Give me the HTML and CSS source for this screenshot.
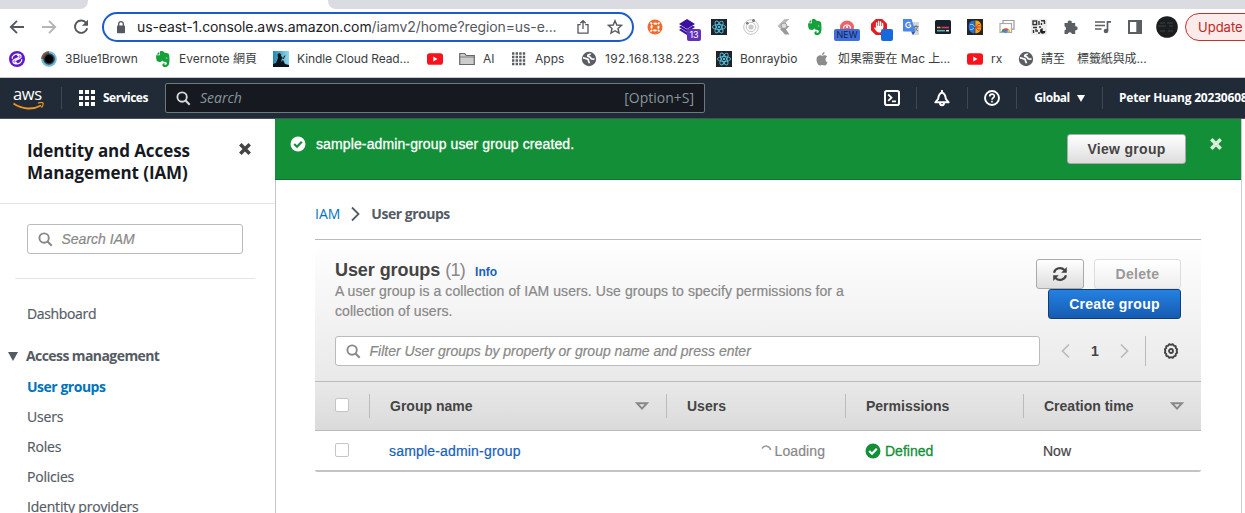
FILE: index.html
```html
<!DOCTYPE html>
<html lang="en">
<head>
<meta charset="utf-8">
<title>IAM User groups</title>
<link rel="stylesheet" href="styles.css">
</head>
<body>
<svg class="defs" width="0" height="0">
  <defs>
    <symbol id="search" viewBox="0 0 16 16"><circle cx="6.5" cy="6.5" r="5" fill="none" stroke="currentColor" stroke-width="2"/><path d="M10.2 10.2 14.6 14.6" stroke="currentColor" stroke-width="2.2"/></symbol>
    <symbol id="react" viewBox="0 0 16 16"><rect width="16" height="16" fill="#20232a"/><g fill="none" stroke="#53c1de" stroke-width=".9"><ellipse cx="8" cy="8" rx="6.6" ry="2.5"/><ellipse cx="8" cy="8" rx="6.6" ry="2.5" transform="rotate(60 8 8)"/><ellipse cx="8" cy="8" rx="6.6" ry="2.5" transform="rotate(120 8 8)"/></g><circle cx="8" cy="8" r="1.2" fill="#53c1de"/></symbol>
    <symbol id="evernote" viewBox="0 0 16 16"><path d="M5 .5V4.200H1.200C.8 6 1.300 9 2.200 10.200c1.300.8 3.600.9 4.300.4l.6-1.300c.5 1.200 1.500 1.600 3.300 1.600 1.100.1 1.400.9 1.400 1.700 0 1-.6 1.300-1.800 1.200-.7 0-.8-.9-.2-1.300-1.500-.6-2.400.3-2.400 1.500 0 1.400.9 2 2.700 2 3.300 0 4.400-2.500 4.400-7C14.500 5 14.200 3.300 13.300 2.500 12.300 2 10.500 1.800 9.500 1.700 8.600.1 6.500-.3 5 .5z" fill="#14a03a"/><path d="M1.500 3.500 4.300.800v2.700z" fill="#14a03a"/><path d="M10.600 7.300c.3-1.200 1.700-1.100 2 .2-.7-.3-1.300-.3-2-.2z" fill="#fff"/></symbol>
    <symbol id="youtube" viewBox="0 0 16 16"><rect y="2.300" width="16" height="11.400" rx="2.800" fill="#f8121b"/><path d="M6.300 5.600v4.800L10.500 8z" fill="#fff"/></symbol>
    <symbol id="globe" viewBox="0 0 16 16"><circle cx="8" cy="8" r="7.200" fill="#5b5e63"/><path d="M2 6.800c1.800 0 2.300.9 3.800 1s1.700 1 1.700 2 .8 1 .8 2.400M9.500 2.500c0 1.300-2.800.9-2.800 2.300 0 1.200 1.800.7 2.600 1.500.7.7.3 1.500 1.500 1.700l2.700.2" fill="none" stroke="#fff" stroke-width="1.700"/></symbol>
    <symbol id="check" viewBox="0 0 16 16"><circle cx="8" cy="8" r="7.500" fill="currentColor"/><path class="tick" d="M4.200 8 7 10.700 11.800 5.700" fill="none" stroke-width="2.200"/></symbol>
    <symbol id="close" viewBox="0 0 12 12"><path d="M1.300 1.300 10.700 10.700M10.700 1.300 1.300 10.700" stroke="currentColor" stroke-width="3.500"/></symbol>
    <symbol id="sort" viewBox="0 0 14 9"><path d="M2 1.200h10L7 6.700z" fill="none" stroke="#888" stroke-width="1.900"/></symbol>
  </defs>
</svg>

<div class="tabs"><div class="tab-left"></div><div class="tab-active"></div><div class="tab-right"></div></div>

<div class="toolbar">
  <div class="nav-buttons">
    <svg width="16" height="16" viewBox="0 0 16 16"><path d="M15 8H2.500M8 1.800 1.800 8 8 14.200" fill="none" stroke="#55585d" stroke-width="1.900"/></svg>
    <svg width="16" height="16" viewBox="0 0 16 16"><path d="M1 8h12.500M8 1.800 14.200 8 8 14.200" fill="none" stroke="#b3b5b8" stroke-width="1.900"/></svg>
    <svg width="16" height="16" viewBox="0 0 16 16"><path d="M13.200 4A6.200 6.200 0 1 0 14.200 9.200" fill="none" stroke="#55585d" stroke-width="1.900"/><path d="M15 .8v6H9z" fill="#55585d"/></svg>
  </div>
  <div class="address">
    <svg class="lock" width="10" height="13" viewBox="0 0 10 13"><rect x="1" y="4.500" width="8" height="7.700" rx=".8" fill="#55585d"/><path d="M2.700 5V3a2.300 2.300 0 0 1 4.600 0v2" fill="none" stroke="#55585d" stroke-width="1.300"/></svg>
    <span class="url"><b>us-east-1.console.aws.amazon.com</b>/iamv2/home?region=us-e...</span>
    <svg class="share" width="14" height="16" viewBox="0 0 14 16"><path d="M4.700 5.700H2v8.500h10V5.700H9.300M7 10V2M4.300 4.300 7 1.700l2.700 2.600" fill="none" stroke="#55585d" stroke-width="1.300"/></svg>
    <svg class="star" width="16" height="16" viewBox="0 0 16 16"><path d="m8 1.700 1.800 4.300 4.700.4L11 9.500l1 4.600-4-2.400-4 2.400 1-4.600L1.500 6.400 6.200 6z" fill="none" stroke="#55585d" stroke-width="1.400"/></svg>
  </div>
  <div class="extensions">
    <span><svg width="16" height="16" viewBox="0 0 16 16"><circle cx="8" cy="8" r="7.500" fill="#f26b2e"/><circle cx="8" cy="8" r="3.500" fill="none" stroke="#fff" stroke-width="1.900" stroke-dasharray="3.500 2" stroke-dashoffset="1.800"/><path d="m3.500 3.500 1.600 1.600m5.800 5.800 1.600 1.600m0-9-1.600 1.600m-5.800 5.800-1.600 1.600" stroke="#fff" stroke-width="1.500"/></svg></span>
    <span><svg width="16" height="16" viewBox="0 0 16 16"><path d="M8 0 16 5 8 10 0 5zM0 8l2-1.300 6 3.800 6-3.800L16 8l-8 5zM0 11l2-1.300 6 3.800V16z" fill="#3b12a0"/></svg><i class="badge count">13</i></span>
    <span><svg width="16" height="16"><use href="#react"/></svg></span>
    <span><svg width="16" height="16" viewBox="0 0 16 16"><g fill="none" stroke="#c4c4c4"><circle cx="8" cy="8" r="7.300"/><circle cx="8" cy="8" r="4.700"/></g><circle cx="8" cy="8" r="2.600" fill="#c9c9c9"/><circle cx="10.500" cy="1.500" r="1.500" fill="#777"/><circle cx="4.300" cy="4.200" r="1.300" fill="#777"/></svg></span>
    <span><svg width="16" height="16" viewBox="0 0 16 16"><path d="M9.500 0h5L5 9.500 2.500 7z" fill="#bbb"/><path d="M9 7h5.500l-3.500 3.500 3.500 5H10L5 10z" fill="#999"/><circle cx="9" cy="6.800" r="2.800" fill="#ddd" stroke="#999"/></svg></span>
    <span><svg width="16" height="16"><use href="#evernote"/></svg></span>
    <span><svg width="16" height="16" viewBox="0 0 16 16"><path d="M1 8a7 6.500 0 0 1 14 0v5H1z" fill="#ea6468"/><path d="M4.500 9.500a3.500 3.500 0 0 1 7 0" fill="none" stroke="#fff" stroke-width="1.200"/><circle cx="8" cy="8" r="1.100" fill="#fff"/></svg><i class="badge new">NEW</i></span>
    <span><svg width="16" height="16" viewBox="0 0 16 16"><path d="M4.800 0h6.400L16 4.800v6.400L11.200 16H4.800L0 11.200V4.800z" fill="#e51b20"/><path d="M5.600 8V4m2 4V2.500M9.600 8V3m2 5V4.500" stroke="#fff" stroke-width="1.400" stroke-linecap="round"/><path d="M4.900 7h7.400c0 4-1.300 6.500-4 6.500-2.200 0-3.600-2-5.300-4.500.7-.8 1.400-.3 1.900.3z" fill="#fff"/></svg><i class="badge blue"></i></span>
    <span><svg width="16" height="16" viewBox="0 0 16 16"><path d="M8 3h8v13H9z" fill="#d7d7d7"/><path d="M0 0h8.500l4 12.500H1.200A1.200 1.200 0 0 1 0 11.300z" fill="#4b86e8"/><path d="m8 12.500 4.500 0L10 16z" fill="#2b57b8"/><path d="M8 6H5.500M7.300 4.200A2.600 2.600 0 1 0 8 6.500" fill="none" stroke="#fff" stroke-width="1.200"/><path d="M10.500 7.500h5M13 6v1.500M14.500 7.500c-.5 2.500-2 3.700-3 4.500M11.500 8c.8 2 2 3 3.500 4" fill="none" stroke="#617a85"/></svg></span>
    <span><svg width="16" height="16" viewBox="0 0 16 16"><rect y="1" width="16" height="14" rx="1.500" fill="#18202c"/><path d="M2 8.500h3.500" stroke="#eea23e" stroke-width="1.600"/><path d="M6.500 8.500H14" stroke="#d83d5d" stroke-width="1.600"/><path d="M2 11.700h8" stroke="#52b3ad" stroke-width="1.600"/><path d="M11 11.700h3" stroke="#ddd" stroke-width="1.600"/></svg></span>
    <span><svg width="16" height="16" viewBox="0 0 16 16"><rect width="16" height="16" fill="#282420"/><path d="M7.700 1.500C3.800 1 1.500 4 1.700 8c0 4 2.500 6.500 6 6.300z" fill="#2673dc"/><path d="M8.300 1.500c3.900-.5 6.200 2.500 6 6.500 0 4-2.500 6.500-6 6.300z" fill="#f3a51c"/><path d="M3 5.500h3l1.500 2M3 10.500h2l2-1.500" stroke="#91c4fa" fill="none"/><path d="M8.500 8 11 5.500h2M8.500 8 11 11h2M8.500 8H14" stroke="#d33d25" fill="none"/></svg></span>
    <span><svg width="16" height="16" viewBox="0 0 16 16"><path d="M4 4V1.500h11v8.700h-2.500" fill="none" stroke="#999" stroke-width="1.200"/><rect x="1" y="4.500" width="11.500" height="9" fill="#fff" stroke="#aaa" stroke-width="1.200"/><path d="M2.500 13a4.300 4.300 0 0 1 8.500 0z" fill="#df4937"/><path d="M2.500 13 4 10l2.500 3z" fill="#2ba24c"/><path d="m11 13-1-3-3 3z" fill="#f5c52c"/><circle cx="6.700" cy="12.200" r="1.700" fill="#4285f4"/></svg></span>
    <span><svg width="16" height="16" viewBox="0 0 16 16"><rect width="16" height="16" fill="#eee"/><g fill="none" stroke="#333" stroke-width="1.400"><rect x="2" y="2" width="3.600" height="3.600"/><path d="M8 2v4M10 1.800h4M13.500 2v3M10.500 4v2M2 8.500h4M8 8h2M2.500 11v3M5 10v2h2M7 14h2"/></g><circle cx="11.700" cy="12" r="2.700" fill="#222"/><path d="M11.700 12V9h3v3z" fill="#eee"/></svg></span>
    <span><svg width="16" height="16" viewBox="0 0 16 16"><path d="M1.500 4h3.300a2 2 0 1 1 3.900 0h3.500v3.300a2 2 0 1 1 0 3.900V15H9a2.200 2.200 0 0 0-4.300 0H1.500v-3.500a2.200 2.200 0 0 0 0-4.200z" fill="#5b5e63"/></svg></span>
    <span><svg width="16" height="16" viewBox="0 0 16 16"><path d="M0 3h10M0 6.500h10M0 10h6.500" stroke="#5b5e63" stroke-width="1.500"/><path d="M16 2.800h-3.500V12" fill="none" stroke="#5b5e63" stroke-width="1.700"/><circle cx="11" cy="12" r="2.300" fill="#5b5e63"/></svg></span>
    <span><svg width="16" height="16" viewBox="0 0 16 16"><rect x="2" y="2" width="12" height="12" fill="#fff" stroke="#5b5e63" stroke-width="2"/><path d="M9.300 2H14v12H9.300z" fill="#5b5e63"/></svg></span>
    <span><svg width="22" height="22" viewBox="0 0 22 22"><circle cx="11" cy="11" r="10.800" fill="#1b1d1f"/><path d="M4 7h5m2 0h6M2 10h8m3 0h4M4 15h5m3 0h5" stroke="#39444a"/></svg></span>
  </div>
  <div class="update">Update</div>
</div>

<div class="bookmarks">
  <div><svg width="16" height="16" viewBox="0 0 16 16"><circle cx="8" cy="8" r="8" fill="#5f19c8"/><path d="M3.300 7.800C2.500 4.800 6 2.800 9.300 3.200c3.200.4 3.800 3 1.400 4.200L7 9.200c-2 1-1 2.800.8 2.200M12.700 8.200c.8 3-2.700 5-6 4.600-3.200-.4-3.800-3-1.400-4.200L9 6.800c2-1 1-2.800-.8-2.200" fill="none" stroke="#fff" stroke-width="1.200"/></svg></div>
  <div><svg width="16" height="16" viewBox="0 0 16 16"><circle cx="8" cy="8" r="7.800" fill="#78b8d4"/><path d="M8 .2A7.800 7.800 0 0 0 .2 8H8z" fill="#875333"/><circle cx="8" cy="8" r="5.800" fill="#27465a"/><circle cx="8" cy="8" r="4.300" fill="#000"/></svg><span class="b1">3Blue1Brown</span></div>
  <div><svg width="16" height="16"><use href="#evernote"/></svg><span class="b2">Evernote 網頁</span></div>
  <div><svg width="16" height="16" viewBox="0 0 16 16"><defs><linearGradient id="sky"><stop stop-color="#2387ae"/><stop offset="1" stop-color="#92d9ea"/></linearGradient></defs><rect width="16" height="16" fill="url(#sky)"/><path d="M0 16h16v-2l-4-1-2-4-2 2 1-4 2 1-3-3c1-3-3-4-3.500-1L5 7l-2 5-3 1z" fill="#07141c"/><path d="m10 8 2-3.500" stroke="#07141c"/></svg><span class="b3">Kindle Cloud Read...</span></div>
  <div><svg width="16" height="16"><use href="#youtube"/></svg></div>
  <div><svg width="16" height="16" viewBox="0 0 16 16"><path d="M.7 13.500v-11h5l1.600 2h8v9z" fill="#ccc" stroke="#68696b" stroke-width="1.200"/><path d="M1 6h14" stroke="#68696b" stroke-width=".8"/></svg><span class="b4">AI</span></div>
  <div><svg width="16" height="16" viewBox="0 0 16 16"><path d="M1 2.500h13.500M1 6h13.500M1 9.500h13.500M1 13h13.500" stroke="#5b5e63" stroke-width="2.400" stroke-dasharray="2.400 1.200"/></svg><span class="b5">Apps</span></div>
  <div><svg width="16" height="16"><use href="#globe"/></svg><span class="b6">192.168.138.223</span></div>
  <div><svg width="16" height="16"><use href="#react"/></svg><span class="b7">Bonraybio</span></div>
  <div><svg width="16" height="16" viewBox="0 0 16 16"><path d="M10.600 1c.1 1.800-1.200 3-2.600 3 0-1.600 1.200-2.800 2.600-3zM13.500 11.500c-.8 1.800-1.700 3-2.800 3-.9 0-1.300-.5-2.400-.5s-1.500.5-2.300.5C4 14.500 2.500 11 2.500 8.500c0-4 3.500-4.700 5-3.900.7.300 1.100.2 1.800-.1 1.300-.5 2.900-.1 3.800 1.200-2.200 1.300-2 4.400.4 5.800z" fill="#8b8b8b"/></svg><span class="b8">如果需要在 Mac 上...</span></div>
  <div><svg width="16" height="16"><use href="#youtube"/></svg><span class="b9">rx</span></div>
  <div><svg width="16" height="16"><use href="#globe"/></svg><span class="b10">請至</span><span class="b11">標籤紙與成...</span></div>
</div>

<header class="aws">
  <div class="logo"><span>aws</span><svg width="32" height="8" viewBox="0 0 32 8"><path d="M.5 1.500C9 7.500 20 8 28 3.500" fill="none" stroke="#ef9325" stroke-width="2"/><path d="M25 1.200c2-.7 4.500-.8 5 0 .4.900-.4 3.300-1.600 4.400" fill="none" stroke="#ef9325" stroke-width="1.300"/></svg></div>
  <div class="services">
    <svg width="16" height="16" viewBox="0 0 17 17"><path d="M0 2.200h17M0 8.500h17M0 14.800h17" stroke="#fff" stroke-width="4.200" stroke-dasharray="4.300 2.050"/></svg>
    <span>Services</span>
  </div>
  <div class="aws-search"><svg width="15" height="15"><use href="#search"/></svg><em>Search</em><span>[Option+S]</span></div>
  <div class="tool shell"><svg width="16" height="16" viewBox="0 0 16 16"><rect x="1" y="1" width="14" height="14" rx="1.800" fill="none" stroke="#fff" stroke-width="2"/><path d="M4.200 4.500 7.500 7.700l-3.300 3.200M8 11.300h4" fill="none" stroke="#fff" stroke-width="1.800"/></svg></div>
  <div class="tool bell"><svg width="16" height="17" viewBox="0 0 16 17"><path d="M1.300 12.300h13.400l-2.900-3.500C11.500 5.500 10.500 3.300 8 2.500 5.500 3.300 4.500 5.500 4.200 8.800z" fill="none" stroke="#fff" stroke-width="1.900" stroke-linejoin="round"/><path d="M8 0v2.500M6 13c0 3 4 3 4 0" fill="none" stroke="#fff" stroke-width="1.900"/></svg></div>
  <div class="tool help"><svg width="16" height="16" viewBox="0 0 16 16"><circle cx="8" cy="8" r="7" fill="none" stroke="#fff" stroke-width="1.900"/><path d="M5.700 6.400c0-3 4.700-3 4.700-.3C10.400 7.800 8 7.700 8 9.700M8 10.800v1.700" fill="none" stroke="#fff" stroke-width="1.600"/></svg></div>
  <div class="tool global"><span>Global</span><i class="caret"></i></div>
  <div class="tool account">Peter Huang 20230608</div>
</header>

<div class="page">
  <aside>
    <div class="side-head"><h2>Identity and Access<br>Management (IAM)</h2><svg width="12" height="12"><use href="#close"/></svg></div>
    <div class="side-search"><svg width="15" height="15"><use href="#search"/></svg><em>Search IAM</em></div>
    <nav>
      <a class="dash">Dashboard</a>
      <div class="section"><i></i><b>Access management</b></div>
      <a class="current">User groups</a>
      <a>Users</a>
      <a>Roles</a>
      <a>Policies</a>
      <a>Identity providers</a>
    </nav>
  </aside>
  <main>
    <div class="flash">
      <svg class="ok" width="16" height="16"><use href="#check"/></svg>
      <span class="message">sample-admin-group user group created.</span>
      <button class="btn view">View group</button>
      <svg class="dismiss" width="12" height="12"><use href="#close"/></svg>
    </div>
    <div class="crumbs"><a>IAM</a><svg width="9" height="16" viewBox="0 0 9 16"><path d="m1 1.500 6.500 6.500L1 14.500" fill="none" stroke="#545b64" stroke-width="1.800"/></svg><b>User groups</b></div>
    <section class="panel">
      <div class="panel-head">
        <div class="panel-title">
          <div class="title"><h1>User groups</h1><span>(1)</span><a>Info</a></div>
          <p>A user group is a collection of IAM users. Use groups to specify permissions for a<br>collection of users.</p>
        </div>
        <div class="actions">
          <button class="btn refresh"><svg width="16" height="16" viewBox="0 0 16 16"><path d="M2 6.700A6.200 6.200 0 0 1 12.500 4M14 9.300A6.200 6.200 0 0 1 3.500 12" fill="none" stroke="#444" stroke-width="2.200"/><path d="M14.800 1v5.700H9.200zM1.200 15V9.300h5.600z" fill="#444"/></svg></button>
          <button class="btn delete">Delete</button>
          <button class="btn create">Create group</button>
        </div>
      </div>
      <div class="filters">
        <div class="filter"><svg width="15" height="15"><use href="#search"/></svg><em>Filter User groups by property or group name and press enter</em></div>
        <svg class="prev" width="9" height="16" viewBox="0 0 9 16"><path d="M8 1.500 1.500 8 8 14.500" fill="none" stroke="#bbb" stroke-width="1.700"/></svg>
        <b>1</b>
        <svg class="next" width="9" height="16" viewBox="0 0 9 16"><path d="M1 1.500 7.500 8 1 14.500" fill="none" stroke="#bbb" stroke-width="1.700"/></svg>
        <div class="gear"><svg width="16" height="16" viewBox="0 0 16 16"><path d="m6.300 1.200 1.700.6 1.700-.6 1.100 1.400 1.900.6.100 1.900L14.100 6.300 13.700 8l.4 1.700-1.300 1.200-.1 1.900-1.900.6-1.100 1.400L8 14.200l-1.700.6-1.100-1.400-1.900-.6-.1-1.900L1.900 9.700 2.300 8l-.4-1.700 1.300-1.200.1-1.900 1.900-.6z" fill="none" stroke="#444" stroke-width="1.900" stroke-linejoin="round"/><circle cx="8" cy="8" r="2" fill="none" stroke="#444" stroke-width="1.800"/></svg></div>
      </div>
      <div class="row head">
        <div class="pick"><i></i></div>
        <div class="cell name"><b>Group name</b><svg width="14" height="9"><use href="#sort"/></svg></div>
        <div class="cell users"><b>Users</b></div>
        <div class="cell perms"><b>Permissions</b></div>
        <div class="cell time"><b>Creation time</b><svg width="14" height="9"><use href="#sort"/></svg></div>
      </div>
      <div class="row data">
        <div class="pick"><i></i></div>
        <div class="cell name"><a>sample-admin-group</a></div>
        <div class="cell users"><svg width="11" height="14" viewBox="0 0 11 14"><path d="M1 4.500C3.500 1 8.500 1.200 9.700 6" fill="none" stroke="#999" stroke-width="1.500"/></svg><span>Loading</span></div>
        <div class="cell perms"><svg width="16" height="16"><use href="#check"/></svg><span>Defined</span></div>
        <div class="cell time">Now</div>
      </div>
    </section>
  </main>
</div>
</body>
</html>
```
FILE: styles.css
```css
* { box-sizing: border-box; }
body { margin: 0; width: 1245px; height: 513px; overflow: hidden; background: #fff; font: 14px/20px "Liberation Sans", Arial, sans-serif; color: #444; }
svg { display: block; flex: none; }
.defs { position: absolute; }
h1, h2, p { margin: 0; }
span, b, em, a { white-space: nowrap; }
i { font-style: normal; }

/* browser chrome */
.tabs { display: flex; height: 9px; }
.tab-left { width: 88px; background: #dadce2; border-radius: 0 0 8px 0; }
.tab-active { width: 240px; }
.tab-right { flex: 1; background: #dadce2; border-radius: 0 0 0 8px; }
.toolbar { display: flex; align-items: center; height: 36px; font-family: Inter, Roboto, sans-serif; }
.toolbar > div { flex: none; }
.nav-buttons { display: flex; gap: 16px; width: 102px; padding-left: 9px; }
.address { display: flex; align-items: center; width: 532px; height: 30px; border: 2px solid #1d5bc9; border-radius: 15px; padding-left: 12px; }
.url { width: 441px; margin-left: 11px; font-size: 14px; color: #55585d; letter-spacing: -.1px; }
.url b { font-weight: 400; color: #202124; }
.share { margin-left: -2px; }
.star { margin-left: 17px; }
.extensions { display: flex; margin-left: 5px; }
.extensions span { position: relative; display: flex; justify-content: center; align-items: center; width: 32px; height: 36px; }
.badge { position: absolute; text-align: center; border-radius: 2px; }
.count { left: 16px; top: 20px; width: 14px; height: 12px; background: #6132b4; color: #fff; font-size: 9px; line-height: 12px; }
.new { left: 3px; top: 20px; width: 26px; height: 12px; background: #3f6fdb; color: #14234b; font-size: 9px; line-height: 12px; }
.blue { left: 18px; top: 20px; width: 12px; height: 12px; background: #1769df; }
.update { width: 80px; height: 28px; margin-left: 2px; padding-left: 12px; border: 1px solid #c5322d; border-radius: 14px; background: #fbebea; color: #bf2722; font-size: 13px; line-height: 26px; }
.bookmarks { display: grid; grid-template-columns: 32px 114px 118px 154px 32px 52px 70px 135px 98px 153px 51px auto; align-items: center; height: 33px; padding: 0 0 5px 9px; border-bottom: 1px solid #c9cbcf; font: 12px/20px Inter, "Noto Sans CJK TC", sans-serif; color: #3b3d40; }
.bookmarks div { display: flex; align-items: center; gap: 8px; }
.b3, .b8, .b11 { letter-spacing: -.1px; }
.b6 { letter-spacing: .4px; }
.b10 { margin-left: -1px; }
.b11 { margin-left: 4px; }

/* console header */
.aws { display: flex; align-items: center; height: 41px; background: #212b37; border-bottom: 1px solid #46515c; color: #fff; font: 700 12px/20px "Open Sans", "Noto Sans", sans-serif; overflow: hidden; }
.aws > div { flex: none; }
.logo { width: 32px; margin: 1px 0 0 13px; }
.logo span { display: block; height: 14px; font-size: 16.500px; line-height: 11px; font-weight: 500; letter-spacing: -.3px; }
.services { display: flex; align-items: center; gap: 8px; width: 103px; height: 22px; margin-left: 16px; padding-left: 17px; border-left: 1px solid #3d4651; letter-spacing: -.5px; }
.aws-search { display: flex; align-items: center; width: 540px; height: 30px; margin-left: 1px; border: 1px solid #697b7c; border-radius: 2px; background: #16191f; padding: 0 10px 0 10px; font-weight: 400; font-size: 14px; color: #87979a; }
.aws-search svg { color: #d5dbdb; }
.aws-search em { flex: 1; margin-left: 9px; }
.tool { display: flex; align-items: center; justify-content: center; height: 22px; border-left: 1px solid #3d4651; }
.shell { margin-left: 162px; width: 49px; border: 0; }
.bell { width: 51px; }
.help { width: 49px; }
.global { width: 86px; gap: 7px; letter-spacing: -.45px; }
.caret { border: 4.500px solid transparent; border-top: 7px solid #fff; border-bottom: 0; }
.account { padding-left: 16px; white-space: nowrap; letter-spacing: -.2px; }

/* sidebar */
.page { display: flex; height: 394px; overflow: hidden; }
aside { width: 276px; flex: none; border-right: 1px solid #c4c6c8; font-family: "Open Sans", "Noto Sans", sans-serif; color: #545b64; }
.side-head { display: flex; justify-content: space-between; height: 85px; padding: 21px 24px 0 27px; border-bottom: 1px solid #e3e6e6; }
.side-head h2 { font-size: 17px; line-height: 22px; letter-spacing: -.08px; color: #16191f; }
.side-head svg { margin-top: 3px; color: #444; }
.side-search { display: flex; align-items: center; width: 216px; height: 30px; margin: 20px 0 0 27px; padding-left: 10px; border: 1px solid #bbb; border-radius: 3px; color: #888; font-family: "Liberation Sans", sans-serif; }
.side-search em, .filter em { margin-left: 8.500px; -webkit-text-stroke: .2px #888; }
nav { display: flex; flex-direction: column; width: 240px; margin: 24px 0 0 15px; padding: 25px 0 0 12px; border-top: 1px solid #e3e6e6; }
nav a { height: 30px; line-height: 20px; letter-spacing: -.2px; -webkit-text-stroke: .2px #545b64; }
nav .dash { height: 42px; letter-spacing: -.35px; }
.section { display: flex; align-items: center; height: 20px; margin: 0 0 11px -19px; }
.section i { border: 5.500px solid transparent; border-top: 9px solid #545b64; border-bottom: 0; }
.section b { margin-left: 8px; letter-spacing: -.58px; }
nav .current { color: #0073bb; font-weight: 700; letter-spacing: -.48px; -webkit-text-stroke: 0; }

/* main */
main { width: 966px; flex: none; border-right: 1px solid #c9cdd1; }
.flash { display: flex; height: 61px; margin-left: -1px; padding: 15px 19px 0 15px; background: #128f37; color: #fff; border-bottom: 1px solid #0b762b; }
.ok { margin-top: 2px; color: #fff; }
.tick { stroke: var(--tick, #fff); }
.ok { --tick: #128f37; }
.message { margin-left: 10px; flex: 1; letter-spacing: .12px; -webkit-text-stroke: .3px #fff; }
.dismiss { margin: 4px 0 0 24px; color: #d8eedd; }
.btn { height: 30px; padding: 0; border: 1px solid #aaa; border-radius: 3px; background: linear-gradient(#fff, #ddd); color: #444; font: 700 14px "Liberation Sans", sans-serif; letter-spacing: .3px; text-align: center; }
.view { width: 119px; }
.crumbs { display: flex; align-items: center; height: 20px; margin: 24px 0 15px 39px; color: #545b64; font-family: "Open Sans", sans-serif; }
.crumbs a { color: #0073bb; }
.crumbs b { letter-spacing: -.48px; }
.crumbs svg { margin: 0 11px; }
.panel { width: 886px; height: 233px; margin-left: 39px; border-top: 1px solid #bbb; border-bottom: 2px solid #c4c4c4; background: #fff linear-gradient(#fff, #e9e9e9 142px, #dadada) no-repeat 0 0 / 100% 191px; border-radius: 0 0 2px 2px; }
.panel-head { display: flex; justify-content: space-between; height: 96px; padding: 20px 20px 0; }
.title { display: flex; align-items: baseline; height: 21px; }
.title h1 { font-size: 18px; line-height: 21px; color: #444; letter-spacing: -.08px; }
.title span { margin-left: 5px; font-size: 18px; letter-spacing: -.7px; color: #888; }
.title a { margin-left: 10px; font-size: 12px; font-weight: 700; color: #1560bd; }
.panel-title p { color: #888; letter-spacing: .075px; -webkit-text-stroke: .2px #888; }
.actions { display: flex; flex-wrap: wrap; justify-content: flex-end; align-content: flex-start; width: 150px; margin-top: -1px; }
.refresh { display: flex; align-items: center; justify-content: center; width: 48px; }
.delete { width: 87px; margin-left: 10px; color: #999; border-color: #ddd; background: linear-gradient(#fff, #eee); }
.create { width: 133px; color: #fff; border-color: #0f3e75; background: linear-gradient(#2581e2, #165bb1); }
.filters { display: flex; align-items: center; height: 46px; padding: 0 20px 15px; border-bottom: 1px solid #bbb; }
.filter { display: flex; align-items: center; width: 705px; height: 30px; padding-left: 10px; border: 1px solid #bbb; border-radius: 3px; background: #fff; color: #888; }
.prev { margin-left: 21px; }
.filters b { width: 50px; text-align: center; }
.gear { display: flex; align-items: center; justify-content: flex-end; width: 34px; height: 30px; margin-left: 16px; border-left: 1px solid #bbb; }
.row { display: flex; align-items: center; }
.head { height: 49px; border-bottom: 1px solid #bbb; }
.data { height: 40px; }
.pick { width: 54px; padding-left: 20px; }
.pick i { display: block; width: 14px; height: 14px; margin-bottom: 2px; border: 1px solid #c5c5c5; border-radius: 2px; background: #fff; }
.cell { display: flex; align-items: center; height: 24px; padding-left: 20px; border-left: 1px solid #bbb; }
.data .cell { border-color: transparent; padding-left: 19px; }
.name { width: 297px; padding-right: 17px; }
.name b, .time b { flex: 1; }
.users { width: 179px; }
.perms { width: 178px; }
.time { width: 178px; padding-right: 17px; }
.data .time { -webkit-text-stroke: .2px #444; }
.name a { color: #1560bd; letter-spacing: .18px; -webkit-text-stroke: .2px #1560bd; }
.data .users { justify-content: flex-end; padding-right: 20px; gap: 3px; color: #888; }
.data .users span { letter-spacing: .08px; -webkit-text-stroke: .2px #888; }
.data .perms { gap: 4px; color: #128f37; }
.data .perms span { -webkit-text-stroke: .3px #128f37; }
```
